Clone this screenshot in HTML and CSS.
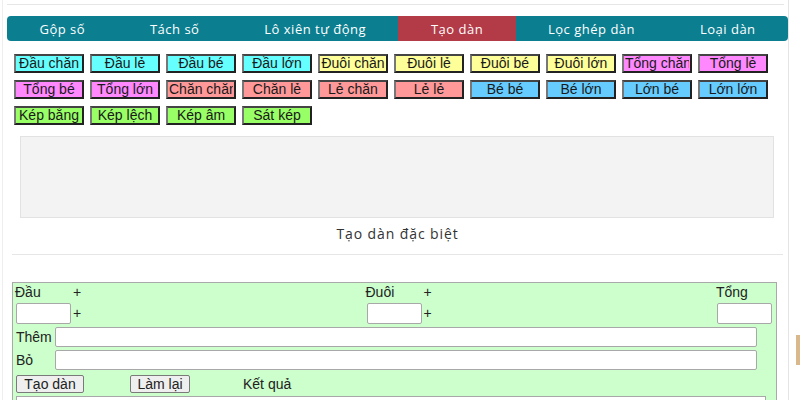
FILE: index.html
```html
<!DOCTYPE html>
<html lang="vi">
<head>
<meta charset="utf-8">
<title>Tạo dàn</title>
<link rel="stylesheet" href="styles.css">
</head>
<body>
<div class="page">
  <div class="main">
    <div class="topline"></div>
    <nav class="tabs">
      <a class="tab">Gộp số</a>
      <a class="tab">Tách số</a>
      <a class="tab">Lô xiên tự động</a>
      <a class="tab active">Tạo dàn</a>
      <a class="tab">Lọc ghép dàn</a>
      <a class="tab">Loại dàn</a>
    </nav>
    <div class="chips">
      <button class="chip c-dau"><span>Đầu chẵn</span></button>
      <button class="chip c-dau"><span>Đầu lẻ</span></button>
      <button class="chip c-dau"><span>Đầu bé</span></button>
      <button class="chip c-dau"><span>Đầu lớn</span></button>
      <button class="chip c-duoi"><span>Đuôi chẵn</span></button>
      <button class="chip c-duoi"><span>Đuôi lẻ</span></button>
      <button class="chip c-duoi"><span>Đuôi bé</span></button>
      <button class="chip c-duoi"><span>Đuôi lớn</span></button>
      <button class="chip c-tong"><span>Tổng chẵn</span></button>
      <button class="chip c-tong"><span>Tổng lẻ</span></button>
      <button class="chip c-tong"><span>Tổng bé</span></button>
      <button class="chip c-tong"><span>Tổng lớn</span></button>
      <button class="chip c-chan"><span>Chẵn chẵn</span></button>
      <button class="chip c-chan"><span>Chẵn lẻ</span></button>
      <button class="chip c-chan"><span>Lẻ chẵn</span></button>
      <button class="chip c-chan"><span>Lẻ lẻ</span></button>
      <button class="chip c-be"><span>Bé bé</span></button>
      <button class="chip c-be"><span>Bé lớn</span></button>
      <button class="chip c-be"><span>Lớn bé</span></button>
      <button class="chip c-be"><span>Lớn lớn</span></button>
      <button class="chip c-kep"><span>Kép bằng</span></button>
      <button class="chip c-kep"><span>Kép lệch</span></button>
      <button class="chip c-kep"><span>Kép âm</span></button>
      <button class="chip c-kep"><span>Sát kép</span></button>
    </div>
    <textarea class="special"></textarea>
    <p class="caption">Tạo dàn đặc biệt</p>
    <div class="divider"></div>
    <div class="form">
      <div class="sums">
        <span>Đầu</span><span>+</span><span>Đuôi</span><span>+</span><span>Tổng</span>
        <input class="num" type="text"><span class="plus">+</span><input class="num" type="text"><span class="plus">+</span><input class="num" type="text">
      </div>
      <div class="line"><label>Thêm</label><input class="wide" type="text"></div>
      <div class="line"><label>Bỏ</label><input class="wide" type="text"></div>
      <div class="actions">
        <button class="btn btn-make">Tạo dàn</button>
        <button class="btn btn-reset">Làm lại</button>
        <span class="result-label">Kết quả</span>
      </div>
      <textarea class="result"></textarea>
    </div>
  </div>
  <aside class="side"><div class="side-mark"></div></aside>
</div>
</body>
</html>
```

FILE: styles.css
```css
* { box-sizing: border-box; }
html, body { margin: 0; padding: 0; background: #fff; }
body { font-family: "Liberation Sans", Arial, sans-serif; color: #222; overflow: hidden; height: 400px; }

.page { display: flex; height: 400px; padding-left: 2px; }
.main { width: 788px; border-left: 1px solid #eeeeee; border-right: 1px solid #e4e4e4; padding-left: 4px; }
.side { flex: 1; padding-top: 335px; }
.side-mark { margin-left: 7px; width: 4px; height: 30px; background: #d9b98c; }

.topline { margin-top: 4px; width: 777px; border-top: 1px solid #e6e6e6; }

.tabs { display: flex; margin-top: 11px; width: 781px; height: 25px; background: #0b7e90; border-radius: 4px; overflow: hidden; }
.tab { flex: 1 1 auto; display: flex; align-items: center; justify-content: center; color: #fff; font-family: "Open Sans", sans-serif; font-size: 13px; letter-spacing: 0.5px; padding: 0 10px; }
.tab.active { background: #b33a47; }

.chips { display: flex; flex-wrap: wrap; gap: 7px 6px; margin-top: 13px; padding-left: 7px; width: 775px; }
.chip { width: 70px; height: 19px; padding: 0 1px; margin: 0; border: 2px solid; border-color: #444 #222 #222 #777; font-family: "Liberation Sans", Arial, sans-serif; font-size: 14px; line-height: 15px; color: #1a1a1a; overflow: hidden; cursor: pointer; }
.chip span { display: block; width: 100%; text-align: center; white-space: nowrap; overflow: hidden; }
.c-dau { background: #66ffff; }
.c-duoi { background: #ffff99; }
.c-tong { background: #ff88ff; }
.c-chan { background: #ff9999; }
.c-be { background: #66ccff; }
.c-kep { background: #99ff66; }

.special { display: block; margin: 11px 0 0 13px; width: 754px; height: 82px; background: #f3f3f3; border: 1px solid #e2e2e2; resize: none; }

.caption { margin: 6px 0 0; text-align: center; font-family: "Open Sans", sans-serif; font-size: 14px; line-height: 20px; letter-spacing: 0.9px; color: #333; }

.divider { margin: 10px 0 0 5px; width: 771px; border-top: 1px solid #e6e6e6; }

.form { margin: 27px 0 0 5px; width: 765px; height: 200px; background: #ccffcc; border: 1px solid #a9a9a9; padding: 1px 2px 0; font-size: 14px; color: #222; }

.sums { display: grid; grid-template-columns: 58px 1fr 58px 1fr 58px; grid-template-rows: 17px 21px; row-gap: 2px; line-height: 17px; }
.sums .plus { line-height: 21px; padding-left: 0; }
.num { width: 55px; height: 21px; margin: 0 0 0 1px; }
input { border: 1px solid #a8a8a8; border-radius: 2px; background: #fff; padding: 0 3px; font-size: 14px; }

.line { display: grid; grid-template-columns: 40px 702px; align-items: center; margin-top: 3px; height: 20px; }
.line label { padding-left: 1px; }
.wide { height: 20px; width: 702px; }

.actions { display: flex; align-items: center; margin-top: 5px; height: 18px; }
.btn { height: 18px; padding: 0 6px; margin: 0; background: #efefef; border: 1px solid #7a7a7a; border-radius: 2px; font-family: "Liberation Sans", Arial, sans-serif; font-size: 14px; line-height: 15px; color: #222; }
.btn-make { width: 68px; margin-left: 1px; }
.btn-reset { width: 60px; margin-left: 46px; }
.result-label { margin-left: 53px; }

.result { display: block; margin: 3px 0 0 1px; width: 750px; height: 60px; background: #fff; border: 1px solid #a8a8a8; resize: none; }
```
